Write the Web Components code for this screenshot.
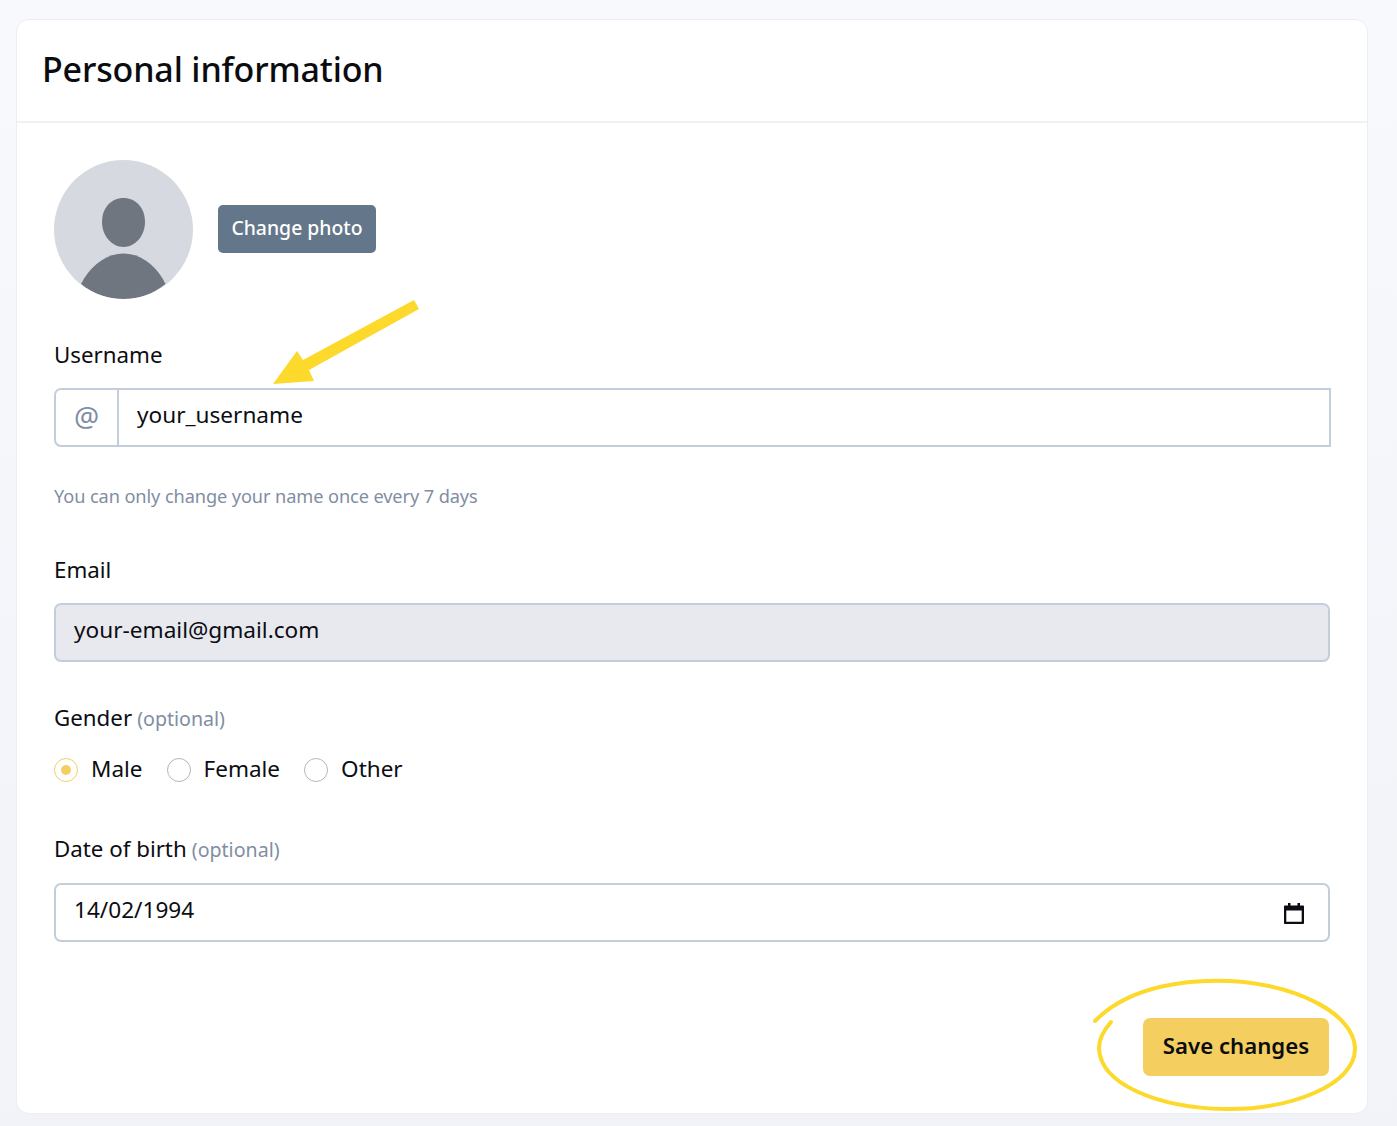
<!DOCTYPE html>
<html lang="en">
<head>
<meta charset="utf-8">
<title>Personal information</title>
<style>
    html, body { margin: 0; height: 100%; }
    body {
        background: linear-gradient(#f7f9fd, #f1f3f8);
        font-family: "Noto Sans", sans-serif;
        color: #0b0d12;
    }
</style>
</head>
<body>
<profile-page></profile-page>

<template id="profile-page-tpl">
    <style>
        :host { display: block; padding: 19px 30px 12px 16px; position: relative; height: 1126px; box-sizing: border-box; }
        form-card { height: 1095px; }
        .photo { display: flex; align-items: center; gap: 25px; margin-bottom: 41px; }
        .photo action-button { margin-bottom: 2px; }
        .hint { margin: 37px 0 47px; font-size: 18.2px; line-height: 24px; color: #7f8ea3; letter-spacing: -.1px; }
        .mt-email { margin-bottom: 41px; }
        .gender { margin-bottom: 51px; }
        .radios { display: flex; gap: 24px; }
        .save { display: flex; justify-content: flex-end; margin-top: 76px; }
        .marks { position: absolute; left: 0; top: 0; pointer-events: none; }
    </style>
    <form-card heading="Personal information">
        <div class="photo">
            <user-avatar></user-avatar>
            <action-button kind="muted">Change photo</action-button>
        </div>
        <form-row label="Username">
            <text-box prefix="@" square>your_username</text-box>
        </form-row>
        <div class="hint">You can only change your name once every 7 days</div>
        <form-row class="mt-email" label="Email">
            <text-box disabled>your-email@gmail.com</text-box>
        </form-row>
        <form-row class="gender" label="Gender" note="(optional)" gap="24">
            <div class="radios">
                <radio-option checked>Male</radio-option>
                <radio-option>Female</radio-option>
                <radio-option>Other</radio-option>
            </div>
        </form-row>
        <form-row label="Date of birth" note="(optional)" gap="19">
            <text-box calendar>14/02/1994</text-box>
        </form-row>
        <div class="save"><action-button kind="primary">Save changes</action-button></div>
    </form-card>
    <svg class="marks" width="1397" height="1126" viewBox="0 0 1397 1126" fill="none">
        <path d="M414 300 L303 360 L297 351 L273 384 L314 381 L309 370 L419 309 Z" fill="#fdd92b"/>
        <path d="M1095 1021 C1130 985 1190 979 1230 981 C1300 985 1354 1015 1355 1048 C1356 1085 1290 1110 1225 1109 C1160 1108 1100 1085 1099 1048 C1099 1038 1104 1030 1111 1022" stroke="#fdd92b" stroke-width="4" stroke-linecap="round"/>
    </svg>
</template>

<template id="form-card-tpl">
    <style>
        :host {
            display: block;
            background: #fff;
            border: 1px solid #eceef3;
            border-radius: 13px;
            box-sizing: border-box;
            width: 1352px;
        }
        header {
            height: 103px;
            box-sizing: border-box;
            padding: 25px 25px 0;
            border-bottom: 2px solid #eff1f5;
            font-size: 34px;
            line-height: 48px;
            font-weight: 500;
            color: #0a0c10;
            letter-spacing: -.15px;
        }
        .body { padding: 37px 38px 0 37px; }
    </style>
    <header></header>
    <div class="body"><slot></slot></div>
</template>

<template id="user-avatar-tpl">
    <style>:host { display: block; width: 139px; height: 139px; } svg { display: block; }</style>
    <svg width="139" height="139" viewBox="0 0 139 139">
        <defs><clipPath id="c"><circle cx="69.5" cy="69.5" r="69.5"/></clipPath></defs>
        <circle cx="69.5" cy="69.5" r="69.5" fill="#d7d9e0"/>
        <g clip-path="url(#c)" fill="#70767f">
            <path d="M69.5 38 C82 38 91 48 91 62 C91 76 81 87 69.5 87 C58 87 48 76 48 62 C48 48 57 38 69.5 38 Z"/>
            <path d="M27 124 C36 106 52 93.500 69.500 93.500 C87 93.500 103 106 111.500 124 C99 134 85 139 69.500 139 C54 139 39 134 27 124 Z"/>
        </g>
    </svg>
</template>

<template id="action-button-tpl">
    <style>
        :host { display: inline-flex; align-items: center; justify-content: center; box-sizing: border-box; font-weight: 500; }
        :host([kind=muted]) {
            width: 158px; height: 48px; padding-bottom: 2px; background: #64768a; color: #fff;
            border-radius: 5px; font-size: 19.4px;
        }
        :host([kind=primary]) {
            width: 186px; height: 58px; padding-bottom: 4px; background: #f4cf60; color: #0b0d12;
            border-radius: 7px; font-size: 22.2px; font-weight: 600;
        }
    </style>
    <slot></slot>
</template>

<template id="form-row-tpl">
    <style>
        :host { display: block; }
        label { display: block; height: 30px; margin-bottom: 18px; font-size: 22.3px; line-height: 30px; color: #0b0d12; }
        span { font-size: 19.6px; color: #7f8ea3; }
    </style>
    <label></label>
    <slot></slot>
</template>

<template id="text-box-tpl">
    <style>
        :host {
            display: flex;
            width: 1276px;
            height: 59px;
            box-sizing: border-box;
            border: 2px solid #c3cedb;
            border-radius: 7px;
            background: #fff;
            font-size: 22.6px;
            color: #0b0d12;
        }
        :host([square]) { border-radius: 7px 0 0 7px; width: 1277px; }
        :host([disabled]) { background: #e8e9ee; }
        .pre {
            width: 63px; flex: none; display: none; align-items: center; justify-content: center;
            border-right: 2px solid #c3cedb; color: #7f8ea3; font-size: 28px; padding-bottom: 3px; box-sizing: border-box;
        }
        .val { flex: 1; display: flex; align-items: center; padding: 0 18px 7px; }
        :host([prefix]) .pre { display: flex; }
        svg { display: none; align-self: center; margin-right: 22px; }
        :host([calendar]) svg { display: block; }
    </style>
    <div class="pre"></div>
    <div class="val"><slot></slot></div>
    <svg width="24" height="24" viewBox="0 0 24 24" fill="none">
        <path d="M3 4.500 H21 C21.600 4.500 22 4.900 22 5.500 V22 C22 22.600 21.600 23 21 23 H3 C2.400 23 2 22.600 2 22 V5.500 C2 4.900 2.400 4.500 3 4.500 Z M4.300 9.500 V20.700 H19.700 V9.500 Z" fill="#0b0d12" fill-rule="evenodd"/>
        <rect x="6" y="2" width="2.500" height="4" fill="#0b0d12"/>
        <rect x="15.500" y="2" width="2.500" height="4" fill="#0b0d12"/>
    </svg>
</template>

<template id="radio-option-tpl">
    <style>
        :host { display: inline-flex; align-items: center; gap: 13px; height: 26px; font-size: 22.5px; color: #0b0d12; }
        i { display: block; width: 24px; height: 24px; box-sizing: border-box; border: 1.500px solid #b4b6bb; border-radius: 50%; position: relative; }
        span { padding-bottom: 3px; }
        :host([checked]) i { border-color: #f4cf60; }
        :host([checked]) i::after { content: ""; position: absolute; left: 6px; top: 6px; width: 10px; height: 10px; border-radius: 50%; background: #f4cf60; }
    </style>
    <i></i><span><slot></slot></span>
</template>

<script>
    // small helper, every element here only differs by its template
    function shadowFrom(el, id) {
        const root = el.attachShadow({ mode: 'open' });
        root.appendChild(document.getElementById(id).content.cloneNode(true));
        return root;
    }

    class FormCard extends HTMLElement {
        constructor() {
            super();
            this.root = shadowFrom(this, 'form-card-tpl');
        }
        connectedCallback() {
            this.root.querySelector('header').textContent = this.getAttribute('heading');
        }
    }

    class FormRow extends HTMLElement {
        constructor() {
            super();
            this.root = shadowFrom(this, 'form-row-tpl');
        }
        connectedCallback() {
            const label = this.root.querySelector('label');
            label.textContent = this.getAttribute('label');
            if (this.hasAttribute('note')) {
                const note = document.createElement('span');
                note.textContent = ' ' + this.getAttribute('note');
                label.appendChild(note);
            }
            if (this.hasAttribute('gap')) {
                label.style.marginBottom = this.getAttribute('gap') + 'px';
            }
        }
    }

    class TextBox extends HTMLElement {
        constructor() {
            super();
            this.root = shadowFrom(this, 'text-box-tpl');
        }
        connectedCallback() {
            this.root.querySelector('.pre').textContent = this.getAttribute('prefix') || '';
        }
    }

    class UserAvatar extends HTMLElement {
        constructor() {
            super();
            shadowFrom(this, 'user-avatar-tpl');
        }
    }

    class ActionButton extends HTMLElement {
        constructor() {
            super();
            shadowFrom(this, 'action-button-tpl');
        }
    }

    class RadioOption extends HTMLElement {
        constructor() {
            super();
            shadowFrom(this, 'radio-option-tpl');
        }
    }

    class ProfilePage extends HTMLElement {
        constructor() {
            super();
            shadowFrom(this, 'profile-page-tpl');
        }
    }

    customElements.define('form-card', FormCard);
    customElements.define('form-row', FormRow);
    customElements.define('text-box', TextBox);
    customElements.define('user-avatar', UserAvatar);
    customElements.define('action-button', ActionButton);
    customElements.define('radio-option', RadioOption);
    customElements.define('profile-page', ProfilePage);
</script>
</body>
</html>
